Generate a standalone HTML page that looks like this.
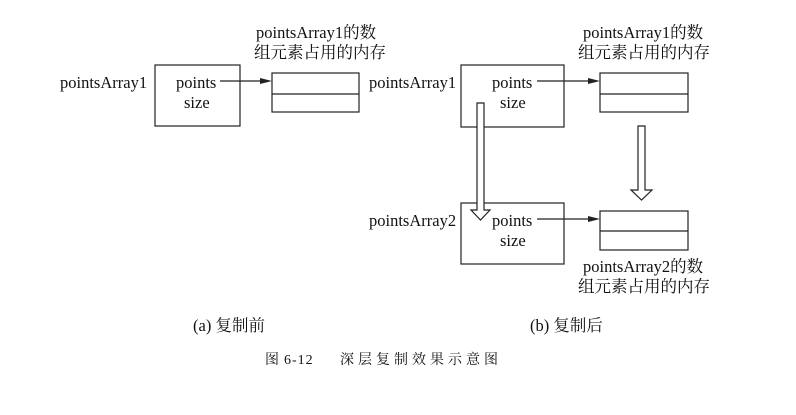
<!DOCTYPE html>
<html><head><style>
body{margin:0;background:#fff;width:796px;height:410px;overflow:hidden}
svg text{font-family:"Liberation Serif","Noto Serif CJK SC",serif;fill:#111}
</style></head><body>
<svg width="796" height="410" viewBox="0 0 796 410">
<g fill="none" stroke="#222" stroke-width="1.2">
<rect x="155" y="65" width="85" height="61"/>
<rect x="272" y="73" width="87" height="39"/><line x1="272" y1="94" x2="359" y2="94"/>
<rect x="461" y="65" width="103" height="62"/>
<rect x="600" y="73" width="88" height="39"/><line x1="600" y1="94" x2="688" y2="94"/>
<rect x="461" y="203" width="103" height="61"/>
<rect x="600" y="211" width="88" height="39"/><line x1="600" y1="231" x2="688" y2="231"/>
<line x1="220" y1="81" x2="262" y2="81"/>
<line x1="537" y1="81" x2="590" y2="81"/>
<line x1="537" y1="219" x2="590" y2="219"/>
<path d="M477 103 H484 V210 H490 L480.5 220 L471 210 H477 Z" fill="#fff"/>
<path d="M638 126 H645 V190 H652 L641.5 200 L631 190 H638 Z" fill="#fff"/>
</g>
<g fill="#222">
<path d="M272 81 L260 78 L260 84 Z"/>
<path d="M600 81 L588 78 L588 84 Z"/>
<path d="M600 219 L588 216 L588 222 Z"/>
</g>
<g font-size="16.5">
<text x="60" y="88">pointsArray1</text>
<text x="176" y="88">points</text>
<text x="184" y="108">size</text>
<text x="256" y="38">pointsArray1的数</text>
<text x="254" y="58">组元素占用的内存</text>
<text x="369" y="88">pointsArray1</text>
<text x="492" y="88">points</text>
<text x="500" y="108">size</text>
<text x="583" y="38">pointsArray1的数</text>
<text x="578" y="58">组元素占用的内存</text>
<text x="369" y="226">pointsArray2</text>
<text x="492" y="226">points</text>
<text x="500" y="246">size</text>
<text x="583" y="272">pointsArray2的数</text>
<text x="578" y="292">组元素占用的内存</text>
<text x="193" y="331">(a) 复制前</text>
<text x="530" y="331">(b) 复制后</text>
</g>
<g font-size="14">
<text x="265" y="364">图</text>
<text x="284" y="364" letter-spacing="1">6-12</text>
<text x="340" y="364" letter-spacing="4">深层复制效果示意图</text>
</g>
</svg>
</body></html>
